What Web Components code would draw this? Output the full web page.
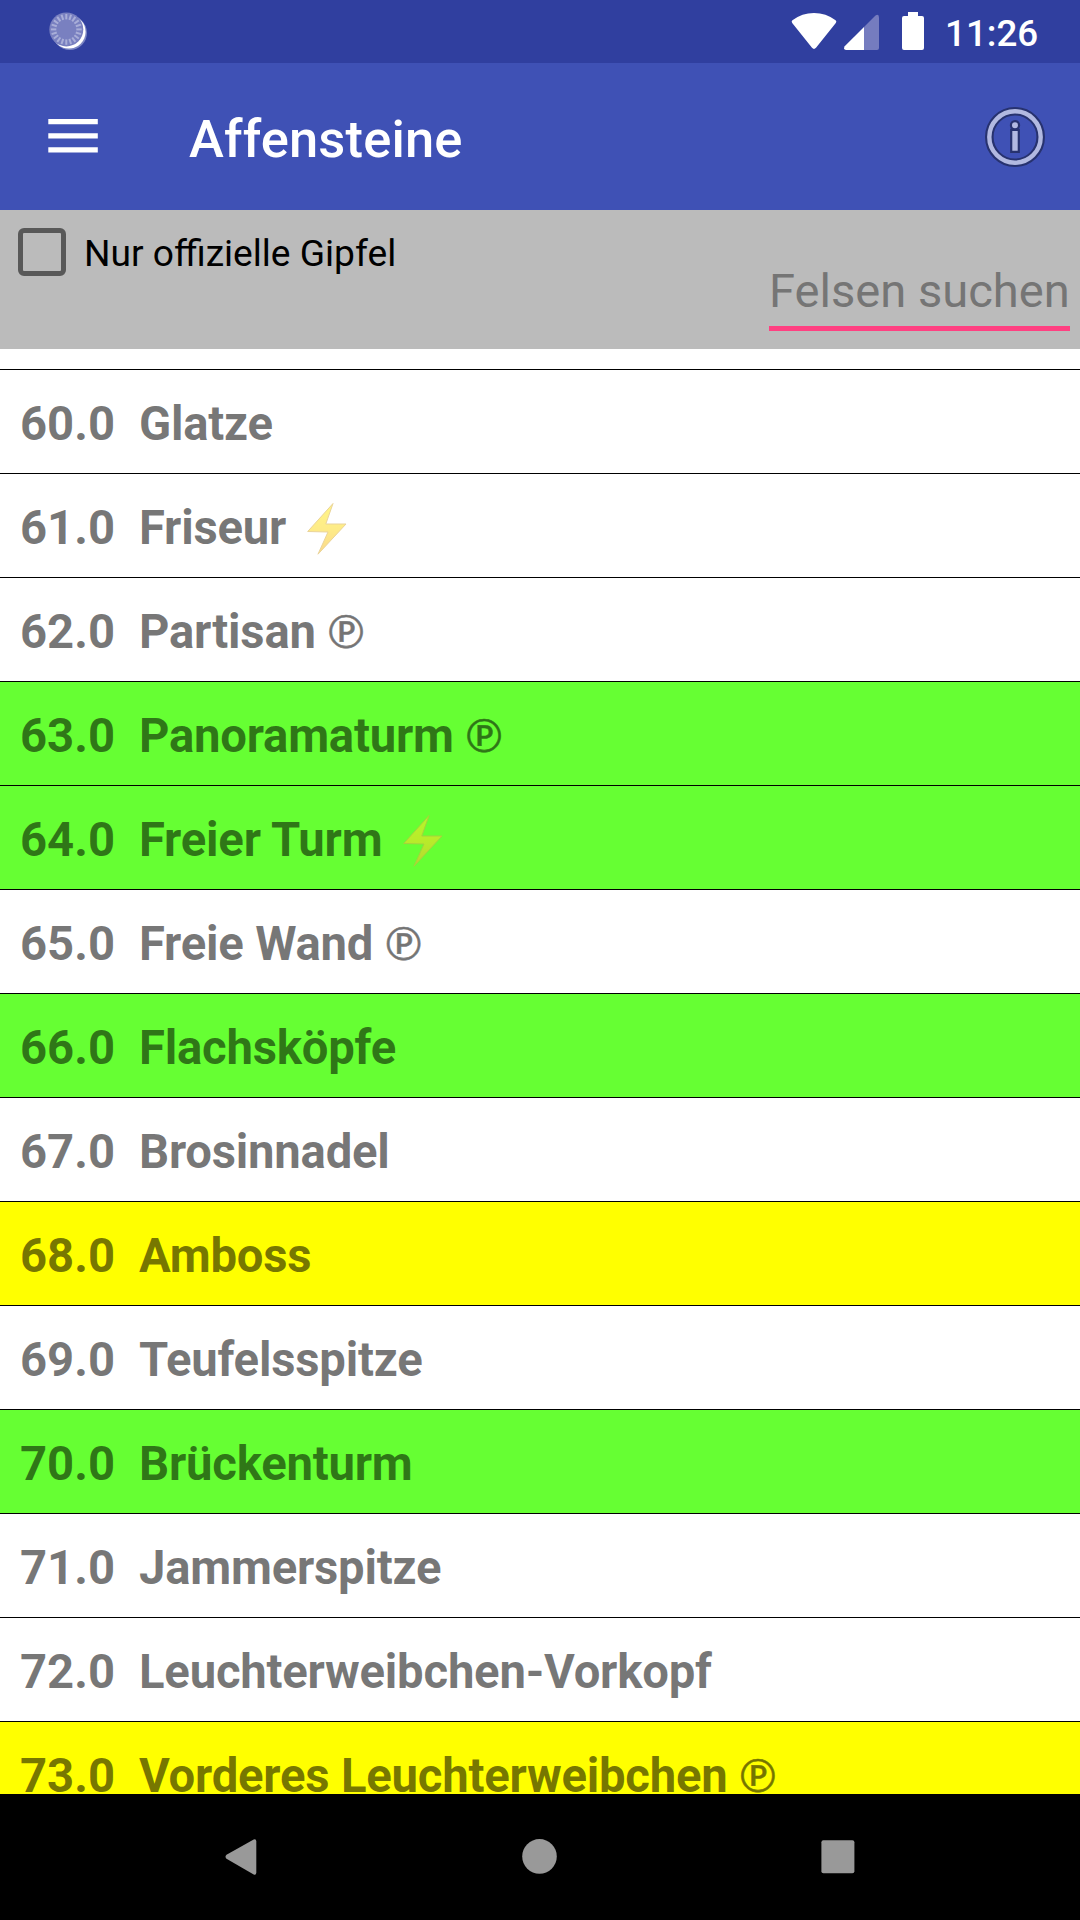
<!DOCTYPE html>
<html lang="de">
<head>
<meta charset="utf-8">
<title>Affensteine</title>
<style>
html,body{margin:0;padding:0}
body{width:1080px;height:1920px;overflow:hidden;background:#fff;font-family:Roboto,"Noto Sans",sans-serif}
</style>
</head>
<body>
<summit-app></summit-app>
<script>
function define(name, html, init) {
  const t = document.createElement('template');
  t.innerHTML = html.trim();
  customElements.define(name, class extends HTMLElement {
    constructor() {
      super();
      this.attachShadow({mode: 'open'}).appendChild(t.content.cloneNode(true));
    }
    connectedCallback() { if (init) init(this, this.shadowRoot); }
  });
}

const ticks = Array.from({length: 20}, (_, i) =>
  `<path d="M17.3 2V7.400" transform="rotate(${i * 18} 17.3 17.4)"/>`).join('');

define('status-bar', `
<style>
:host{display:flex;height:63px;background:#303f9f;box-sizing:border-box;padding:12px 40px 0 49px;color:#fff}
svg{display:block;flex:none}
.sync{margin-right:auto}
.wifi{margin:0 7px 0 0}
.cell{margin:2px 23px 0 0}
.batt{margin-right:21px}
span{font-size:36.75px;line-height:43px;font-weight:500;width:95px;white-space:nowrap}
</style>
<svg class="sync" width="40" height="40" viewBox="0 0 40 40">
 <circle cx="20.8" cy="20.8" r="17.2" fill="#7b85c3"/>
 <circle cx="19.8" cy="19.8" r="16.8" fill="#fff"/>
 <circle cx="17.3" cy="17.4" r="17" fill="#7980c0"/>
 <g stroke="#a9aed8" stroke-width="2">${ticks}</g>
</svg>
<svg class="wifi" width="46" height="38" viewBox="0 0 46 38"><path fill="#fff" d="M1.4 8.3Q11 1 23 1T44.6 8.3Q46 9.5 44.8 11L25 35.800Q23 38 21 35.800L1.200 11Q0 9.500 1.400 8.300Z"/></svg>
<svg class="cell" width="35" height="36" viewBox="0 0 35 36"><path fill="#757cbf" d="M20 13 31.500 1.500Q35 -.5 35 3.500V34Q35 36 33 36H20Z"/><path fill="#fff" d="M20 13V36H2Q-1 35.500.700 32.300Z"/></svg>
<svg class="batt" width="22" height="38" viewBox="0 0 22 38"><path fill="#fff" d="M6 0H16V4H20Q22 4 22 6V36Q22 38 20 38H2Q0 38 0 36V6Q0 4 2 4H6Z"/></svg>
<span>11:26</span>`);

define('app-bar', `
<style>
:host{display:flex;align-items:center;height:147px;background:#3f51b5;color:#fff;box-sizing:border-box;padding:0 34px 0 48px}
h1{margin:4px auto 0 91px;font-size:52.5px;line-height:62px;font-weight:500;letter-spacing:.15px}
svg{display:block}
.menu{margin-top:-2px}
.info{margin-top:1px}
</style>
<svg class="menu" width="50" height="36" viewBox="0 0 50 36"><path fill="#fff" d="M.3 1h49.500v5.300H.3zM.3 15.200h49.500v5.300H.3zM.3 29.300h49.500v5.300H.3z"/></svg>
<h1><slot></slot></h1>
<svg class="info" width="62" height="62" viewBox="0 0 62 62">
 <circle cx="31" cy="31" r="25.700" fill="none" stroke="#27326f" stroke-width="8.600"/>
 <circle cx="31" cy="31" r="25.700" fill="none" stroke="#b2b9e1" stroke-width="4.400"/>
 <g fill="#b2b9e1" stroke="#27326f" stroke-width="2.200"><path d="M27.200 23.900h7.600v21.900h-7.600z"/><circle cx="31" cy="19.200" r="4.100"/></g>
</svg>`);

define('check-box', `
<style>
:host{display:flex;align-items:center;font-size:37.15px;line-height:43px;color:#000}
i{box-sizing:border-box;width:48px;height:48px;border:5px solid #585858;border-radius:6px;margin-right:18px}
span{margin-top:2px}
</style><i></i><span><slot></slot></span>`);

define('search-field', `
<style>
:host{display:block;width:301px;box-sizing:border-box;border-bottom:5px solid #ff4081}
input{all:unset;display:block;width:301px;height:64px;padding-bottom:8px;box-sizing:border-box;font-size:47.1px;line-height:56px;color:#000}
input::placeholder{color:#757575;opacity:1}
</style><input>`, (el, r) => { r.querySelector('input').placeholder = el.getAttribute('placeholder'); });

define('filter-bar', `
<style>
:host{display:flex;justify-content:space-between;align-items:flex-start;height:139px;box-sizing:border-box;background:#bbb;padding:18px 10px 0 18px}
search-field{margin-top:34px}
</style>
<check-box>Nur offizielle Gipfel</check-box>
<search-field placeholder="Felsen suchen"></search-field>`);

define('bolt-icon', `
<style>:host{display:inline-block;width:40px;height:52px;vertical-align:-10.5px;margin-left:9px;opacity:.54;white-space:normal}svg{display:block}</style>
<svg width="40" height="52" viewBox="0 0 40 52"><defs><linearGradient id="g" x1="0" y1="0" x2="0" y2="1"><stop offset="0" stop-color="#ffee22"/><stop offset=".5" stop-color="#fedc24"/><stop offset="1" stop-color="#f8b82c"/></linearGradient></defs>
<path d="M26 .5 .7 28.500 21 29 11 51.200 39 21H18.800Z" fill="url(#g)" stroke="#d9b044" stroke-width="1" stroke-linejoin="round"/></svg>`);

define('summit-row', `
<style>
:host{display:flex;height:104px;box-sizing:border-box;border-top:1px solid #000;background:#fff;color:rgba(0,0,0,.54);font-size:47.250px;font-weight:700;line-height:56px;padding:26px 20px 0;white-space:pre}
:host([state=done]){background:#6f3}
:host([state=tried]){background:#ff0}
.n{width:119px;flex:none}
.name{letter-spacing:-.22px}
.p{font:400 45.500px/46px Lato,"DejaVu Sans",sans-serif;color:#000;opacity:.54;-webkit-text-stroke:.6px #000}
</style><span class="n"></span><span class="name"><slot></slot><span class="m"></span></span>`, (el, r) => {
  r.querySelector('.n').textContent = el.getAttribute('number');
  const m = r.querySelector('.m'), k = el.getAttribute('mark');
  if (k === 'bolt') m.innerHTML = ' <bolt-icon></bolt-icon>';
  if (k === 'p') m.innerHTML = ' <span class="p">℗</span>';
});

const rows = [
  ['60.0', 'Glatze'], ['61.0', 'Friseur', '', 'bolt'], ['62.0', 'Partisan', '', 'p'],
  ['63.0', 'Panoramaturm', 'done', 'p'], ['64.0', 'Freier Turm', 'done', 'bolt'],
  ['65.0', 'Freie Wand', '', 'p'], ['66.0', 'Flachsköpfe', 'done'], ['67.0', 'Brosinnadel'],
  ['68.0', 'Amboss', 'tried'], ['69.0', 'Teufelsspitze'], ['70.0', 'Brückenturm', 'done'],
  ['71.0', 'Jammerspitze'], ['72.0', 'Leuchterweibchen-Vorkopf'],
  ['73.0', 'Vorderes Leuchterweibchen', 'tried', 'p']
];

define('summit-list', `
<style>:host{display:block;flex:1;min-height:0;overflow:hidden;background:#fff;padding-top:20px}</style>
${rows.map(([n, name, s = '', m = '']) => `<summit-row number="${n}" state="${s}" mark="${m}">${name}</summit-row>`).join('')}`);

define('nav-bar', `
<style>
:host{display:flex;justify-content:space-between;align-items:flex-start;height:126px;box-sizing:border-box;background:#000;padding:44px 225px 0}
svg{display:block}
</style>
<svg width="33" height="38" viewBox="0 0 33 38"><path fill="#999" d="M1.500 16.800 28.700 1.500Q31.300.700 31.300 3.500V34.500Q31.300 37.300 28.700 36.500L1.500 20.800Q-.5 18.800 1.500 16.800Z"/></svg>
<svg width="36" height="38" viewBox="0 0 36 38"><circle cx="17.500" cy="18.400" r="17.300" fill="#999"/></svg>
<svg width="34" height="38" viewBox="0 0 34 38"><rect x=".4" y="2.200" width="33" height="33" rx="2" fill="#999"/></svg>`);

define('summit-app', `
<style>:host{display:flex;flex-direction:column;width:1080px;height:1920px;overflow:hidden}
status-bar,app-bar,filter-bar,nav-bar{flex:none}</style>
<status-bar></status-bar>
<app-bar>Affensteine</app-bar>
<filter-bar></filter-bar>
<summit-list></summit-list>
<nav-bar></nav-bar>`);
</script>
</body>
</html>
